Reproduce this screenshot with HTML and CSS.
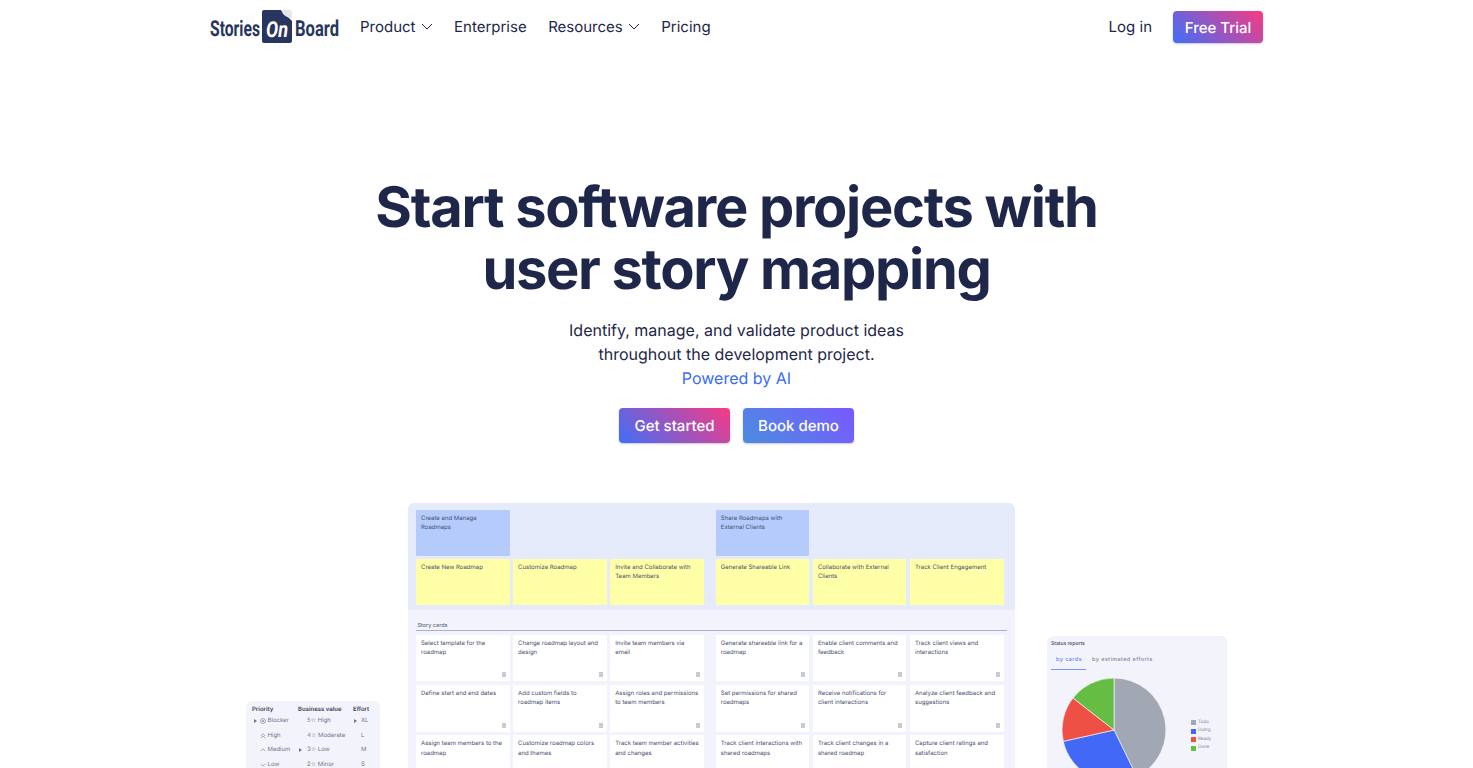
FILE: index.html
```html
<!DOCTYPE html>
<html lang="en">
<head>
  <meta charset="UTF-8">
  <meta name="viewport" content="width=device-width, initial-scale=1.0">
  <title>StoriesOnBoard - User Story Mapping</title>
  <link rel="stylesheet" href="styles.css">
</head>
<body>
  <header class="nav">
    <div class="nav-left">
      <a class="logo" href="#" aria-label="StoriesOnBoard">
        <svg width="130" height="34" viewBox="0 0 130 34">
          <text class="logo-word" x="0" y="26" textLength="50" lengthAdjust="spacingAndGlyphs">Stories</text>
          <path class="logo-box" d="M54 0H71L82 11V31a2 2 0 0 1-2 2H54a2 2 0 0 1-2-2V2a2 2 0 0 1 2-2z"/>
          <path class="logo-fold" d="M71 0L79 0a3 3 0 0 1 3 3V8Q74 8 71 0z"/>
          <text class="logo-on" x="56" y="27" textLength="22" lengthAdjust="spacingAndGlyphs">On</text>
          <text class="logo-word" x="85" y="26" textLength="44" lengthAdjust="spacingAndGlyphs">Board</text>
        </svg>
      </a>
      <nav class="menu">
        <a href="#">Product <svg class="caret" width="12" height="7" viewBox="0 0 12 7"><path d="M1 1l5 5 5-5"/></svg></a>
        <a href="#">Enterprise</a>
        <a href="#">Resources <svg class="caret" width="12" height="7" viewBox="0 0 12 7"><path d="M1 1l5 5 5-5"/></svg></a>
        <a href="#">Pricing</a>
      </nav>
    </div>
    <div class="nav-right">
      <a class="login" href="#">Log in</a>
      <a class="btn btn-pink btn-trial" href="#">Free Trial</a>
    </div>
  </header>

  <section class="hero">
    <h1>Start software projects with<br>user story mapping</h1>
    <p class="sub">Identify, manage, and validate product ideas<br>throughout the development project.<br><span class="ai">Powered by AI</span></p>
    <div class="cta">
      <a class="btn btn-pink btn-cta" href="#">Get started</a>
      <a class="btn btn-blue btn-cta" href="#">Book demo</a>
    </div>
  </section>

  <section class="showcase">
    <div class="board">
      <div class="board-top">
        <div class="groups">
          <div class="cards">
            <div class="card epic">Create and Manage Roadmaps</div>
          </div>
          <div class="cards">
            <div class="card epic">Share Roadmaps with External Clients</div>
          </div>
        </div>
        <div class="groups row-gap">
          <div class="cards">
            <div class="card feature">Create New Roadmap</div>
            <div class="card feature">Customize Roadmap</div>
            <div class="card feature">Invite and Collaborate with Team Members</div>
          </div>
          <div class="cards">
            <div class="card feature">Generate Shareable Link</div>
            <div class="card feature">Collaborate with External Clients</div>
            <div class="card feature">Track Client Engagement</div>
          </div>
        </div>
      </div>
      <div class="board-body">
        <div class="story-label">Story cards</div>
        <div class="groups">
          <div class="cards">
            <div class="card story">Select template for the roadmap<i></i></div>
            <div class="card story">Change roadmap layout and design<i></i></div>
            <div class="card story">Invite team members via email<i></i></div>
            <div class="card story">Define start and end dates<i></i></div>
            <div class="card story">Add custom fields to roadmap items<i></i></div>
            <div class="card story">Assign roles and permissions to team members<i></i></div>
            <div class="card story">Assign team members to the roadmap<i></i></div>
            <div class="card story">Customize roadmap colors and themes<i></i></div>
            <div class="card story">Track team member activities and changes<i></i></div>
          </div>
          <div class="cards">
            <div class="card story">Generate shareable link for a roadmap<i></i></div>
            <div class="card story">Enable client comments and feedback<i></i></div>
            <div class="card story">Track client views and interactions<i></i></div>
            <div class="card story">Set permissions for shared roadmaps<i></i></div>
            <div class="card story">Receive notifications for client interactions<i></i></div>
            <div class="card story">Analyze client feedback and suggestions<i></i></div>
            <div class="card story">Track client interactions with shared roadmaps<i></i></div>
            <div class="card story">Track client changes in a shared roadmap<i></i></div>
            <div class="card story">Capture client ratings and satisfaction<i></i></div>
          </div>
        </div>
      </div>
    </div>

    <div class="panel priority">
      <div class="p-row p-head"><span>Priority</span><span>Business value</span><span>Effort</span></div>
      <div class="p-row">
        <span class="p-cell"><b class="tri"></b><svg class="p-icon" viewBox="0 0 8 8"><circle cx="4" cy="4" r="3.3"/><path d="M2.6 2.6l2.8 2.8M5.4 2.6L2.6 5.4"/></svg>Blocker</span>
        <span class="p-val">5<em>☆</em> High</span>
        <span class="p-eff"><b class="tri"></b>XL</span>
      </div>
      <div class="p-row">
        <span class="p-cell"><svg class="p-icon" viewBox="0 0 8 8"><path d="M1 4l3-3 3 3M1 7l3-3 3 3"/></svg>High</span>
        <span class="p-val">4<em>☆</em> Moderate</span>
        <span class="p-eff">L</span>
      </div>
      <div class="p-row">
        <span class="p-cell"><svg class="p-icon" viewBox="0 0 8 8"><path d="M1 5.5l3-3 3 3"/></svg>Medium</span>
        <span class="p-val"><b class="tri tri-val"></b>3<em>☆</em> Low</span>
        <span class="p-eff">M</span>
      </div>
      <div class="p-row">
        <span class="p-cell"><svg class="p-icon" viewBox="0 0 8 8"><path d="M1 2.5l3 3 3-3"/></svg>Low</span>
        <span class="p-val">2<em>☆</em> Minor</span>
        <span class="p-eff">S</span>
      </div>
    </div>

    <div class="panel status">
      <div class="status-title">Status reports</div>
      <div class="tabs">
        <span class="tab active">by cards</span>
        <span class="tab">by estimated efforts</span>
      </div>
      <div class="chart">
        <svg class="pie" width="104" height="104" viewBox="0 0 104 104">
          <path fill="#a1a8b3" d="M52 52V0A52 52 0 0 1 74.8 98.7z"/>
          <path fill="#4169f5" d="M52 52L74.8 98.7A52 52 0 0 1 1.25 63.35z"/>
          <path fill="#ee5045" d="M52 52L1.25 63.35A52 52 0 0 1 11 20z"/>
          <path fill="#66bd44" d="M52 52L11 20A52 52 0 0 1 52 0z"/>
        </svg>
        <ul class="legend">
          <li><i class="c-todo"></i>Todo</li>
          <li><i class="c-doing"></i>Doing</li>
          <li><i class="c-ready"></i>Ready</li>
          <li><i class="c-done"></i>Done</li>
        </ul>
      </div>
    </div>
  </section>
</body>
</html>
```

FILE: styles.css
```css
* {
  margin: 0;
  padding: 0;
  box-sizing: border-box;
}

html, body {
  height: 768px;
  overflow: hidden;
}

body {
  font-family: 'Inter', 'Liberation Sans', sans-serif;
  background: #fff;
  color: #1e2749;
  text-rendering: geometricPrecision;
}

a {
  color: inherit;
  text-decoration: none;
}

/* nav */
.nav {
  height: 53px;
  margin: 0 210px;
  display: flex;
  align-items: center;
  justify-content: space-between;
}

.nav-left, .nav-right, .menu {
  display: flex;
  align-items: center;
}

.logo {
  display: block;
  width: 130px;
  height: 34px;
  margin-top: 1px;
}

.logo-word {
  font-family: 'Roboto', sans-serif;
  font-weight: 700;
  font-size: 22px;
  fill: #28355f;
}

.logo-on {
  font-family: 'Roboto', sans-serif;
  font-style: italic;
  font-weight: 700;
  font-size: 22px;
  fill: #fff;
}

.logo-box { fill: #28355f; }
.logo-fold { fill: #e4e6ee; }

.menu {
  margin-left: 20px;
  gap: 21.5px;
  font-size: 15px;
  font-weight: 400;
}

.menu a {
  display: flex;
  align-items: center;
  gap: 5px;
}

.caret {
  fill: none;
  stroke: #1e2749;
  stroke-width: 1;
}

.nav-right {
  gap: 21px;
  font-size: 15px;
  font-weight: 400;
}

.btn {
  display: flex;
  align-items: center;
  justify-content: center;
  color: #fff;
  border-radius: 4px;
  font-weight: 500;
  box-shadow: 0 1px 2px rgba(30, 39, 73, 0.25);
}

.btn-pink { background: linear-gradient(45deg, #3f6ff8, #f83a84); }
.btn-blue { background: linear-gradient(45deg, #4a8de0, #7a58ff); }

.btn-trial {
  width: 90px;
  height: 32px;
  font-size: 15px;
  margin-top: 1px;
}

/* hero */
.hero {
  text-align: center;
  padding-top: 123px;
}

h1 {
  font-size: 56px;
  line-height: 62px;
  font-weight: 700;
  letter-spacing: -1.3px;
}

.sub {
  margin-top: 18px;
  font-size: 16px;
  line-height: 24px;
}

.ai { color: #3b6bf6; }

.cta {
  margin-top: 18px;
  display: flex;
  justify-content: center;
  gap: 13px;
}

.btn-cta {
  width: 111px;
  height: 35px;
  font-size: 15px;
}

/* product picture */
.showcase {
  position: relative;
  width: 981px;
  height: 265px;
  margin: 60px auto 0;
  overflow: hidden;
}

.board {
  width: 607px;
  margin-left: 162px;
  font-size: 6px;
  line-height: 9.3px;
  color: #4b5070;
}

.board-top {
  background: #e6ebfc;
  border-radius: 6px 6px 0 0;
  padding: 7px 8px 5px;
}

.board-body {
  background: #f2f3fc;
  padding: 0 8px;
  height: 160px;
}

.groups {
  display: flex;
  gap: 12px;
}

.row-gap { margin-top: 3.5px; }

.cards {
  display: grid;
  grid-template-columns: repeat(3, 93.6px);
  gap: 3.6px 3.5px;
}

.card {
  height: 45.5px;
  padding: 4px 5px;
  border-radius: 1px;
}

.epic { background: #b4cbfb; }
.feature { background: #ffffa8; }

.story-label {
  height: 21.5px;
  padding: 13px 0 0 1.5px;
  border-bottom: 1px solid #a9aed0;
  margin-bottom: 3.5px;
  font-size: 5.5px;
  line-height: 7px;
}

.story {
  height: 46.8px;
  background: #fff;
  display: flex;
  flex-direction: column;
  justify-content: space-between;
}

.story i {
  display: block;
  width: 4px;
  height: 5px;
  margin: 0 -1px 0 auto;
  background: #c9cbd3;
}

.panel {
  position: absolute;
  background: #f2f3fb;
  border-radius: 6px 6px 0 0;
  line-height: 1;
  color: #4b5070;
}

/* priority table */
.priority {
  left: 0;
  top: 198px;
  width: 134px;
  height: 70px;
  padding: 5px 6px;
  font-size: 6px;
}

.p-row {
  display: grid;
  grid-template-columns: 46px 55px 1fr;
  height: 14.5px;
  align-items: center;
  color: #70758c;
}

.p-head {
  height: 7px;
  margin-bottom: 1px;
  font-weight: 600;
  color: #3a405f;
}

.p-cell {
  display: flex;
  align-items: center;
  padding-left: 8px;
  position: relative;
}

.p-icon {
  width: 6px;
  height: 6px;
  margin-right: 1.5px;
  fill: none;
  stroke: #70758c;
  stroke-width: 0.8;
}

.p-val {
  padding-left: 9px;
  position: relative;
}

.p-val em {
  font-style: normal;
  font-family: 'DejaVu Sans', sans-serif;
}

.p-eff {
  padding-left: 8px;
  position: relative;
}

.tri {
  position: absolute;
  left: 2px;
  top: 50%;
  margin-top: -2px;
  border-left: 3px solid #70758c;
  border-top: 2px solid transparent;
  border-bottom: 2px solid transparent;
}

.p-eff .tri { left: 1px; }
.tri-val { left: 1px; }

/* status report */
.status {
  left: 801px;
  top: 133px;
  width: 180px;
  height: 132px;
  padding: 5px 4px;
}

.status-title {
  font-size: 5px;
  line-height: 6px;
  font-weight: 500;
  color: #3a405f;
}

.tabs {
  display: flex;
  margin-top: 8px;
  font-size: 5.5px;
  font-weight: 500;
  letter-spacing: 0.4px;
  color: #84889b;
  white-space: nowrap;
}

.tab {
  padding: 3px 5px 5px;
  margin-right: 1px;
}

.tab.active {
  width: 35px;
  color: #6a86ea;
  border-bottom: 1.5px solid #7a96f5;
}

.chart {
  display: flex;
  margin: 8px 0 0 11px;
}

.pie path {
  stroke: #fff;
  stroke-width: 0.6;
}

.legend {
  list-style: none;
  margin: 41px 0 0 25px;
  font-size: 4.5px;
  color: #84889b;
}

.legend li {
  display: flex;
  align-items: center;
  height: 8.5px;
  gap: 2px;
}

.legend i {
  width: 5px;
  height: 5px;
}

.c-todo { background: #a1a8b3; }
.c-doing { background: #4169f5; }
.c-ready { background: #ee5045; }
.c-done { background: #66bd44; }
```
